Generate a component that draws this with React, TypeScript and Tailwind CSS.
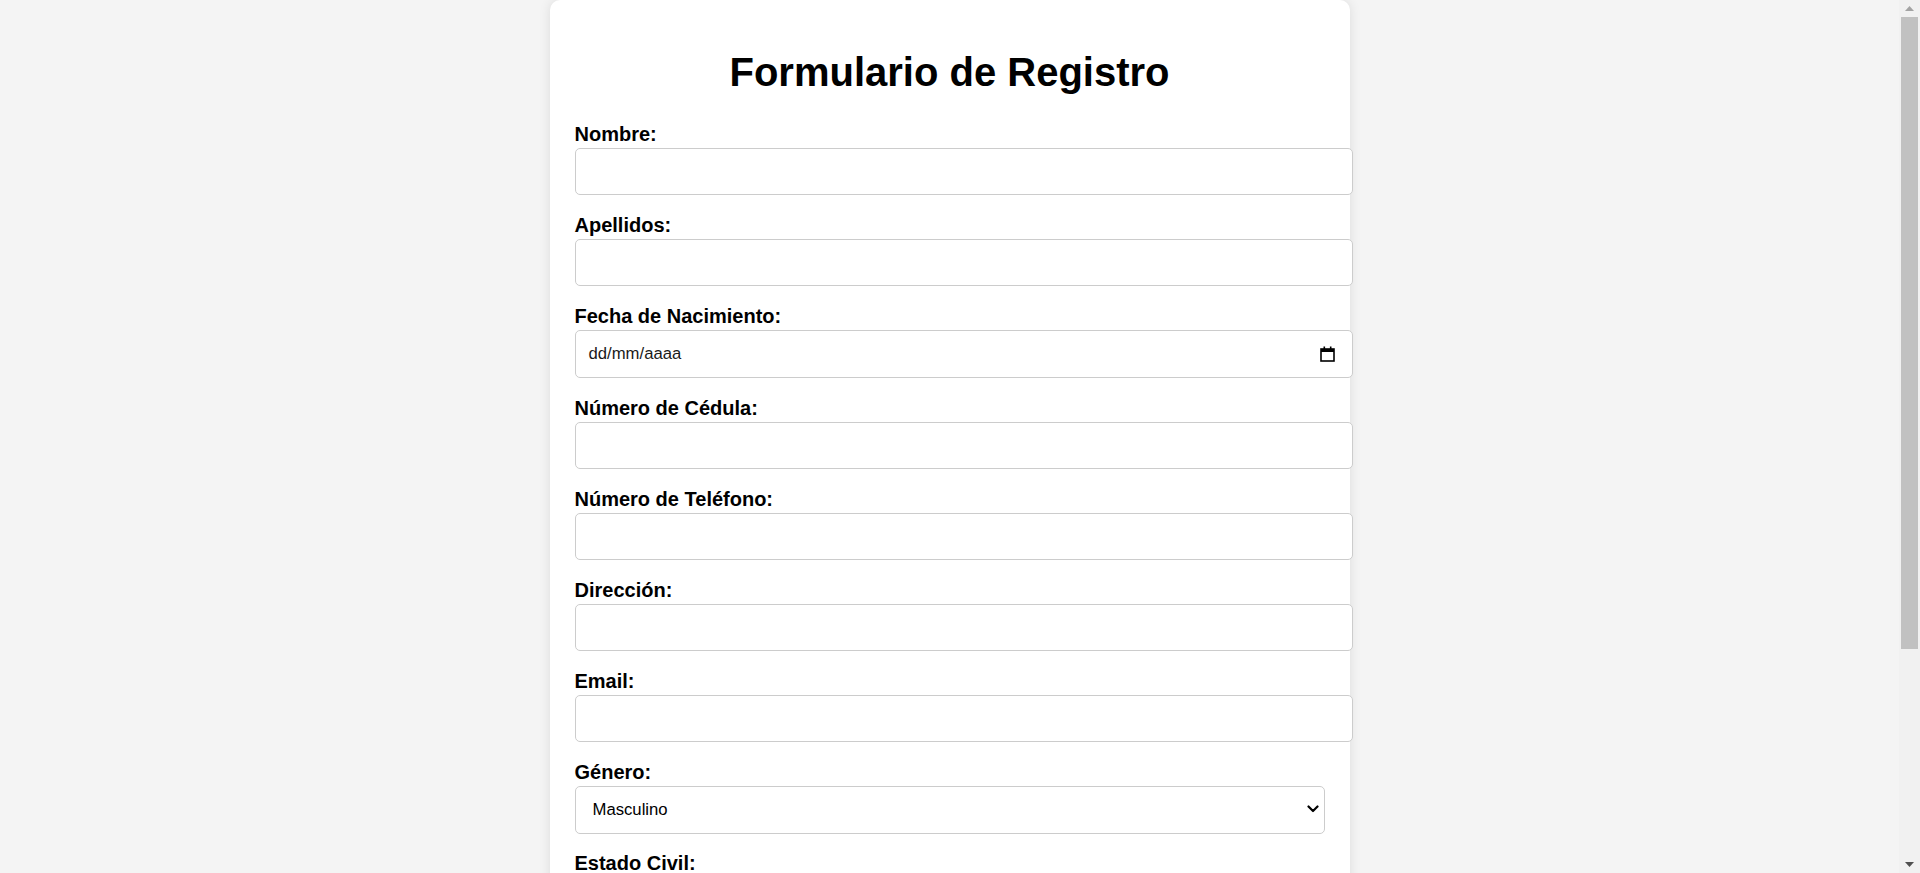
import React from "react";

const FONT = "font-['Liberation_Sans',Arial,sans-serif]";

type FieldProps = {
  label: string;
  type?: string;
};

const Label = ({ children }: { children: React.ReactNode }) => (
  <label className="mb-[2px] block text-[20px] leading-[23px] font-bold text-black">{children}</label>
);

const TextField = ({ label, type = "text" }: FieldProps) => (
  <div className="mb-[19px]">
    <Label>{label}</Label>
    <input
      type={type}
      className="block h-[47px] w-[778px] rounded-[5px] border border-[#cccccc] bg-white px-[13px] text-[16.7px] text-black outline-none"
    />
  </div>
);

const CalendarIcon = () => (
  <svg width="15" height="16" viewBox="0 0 15 16" fill="none">
    <rect x="1" y="3" width="13" height="12" stroke="#000" strokeWidth="1.6" />
    <rect x="1" y="3" width="13" height="3" fill="#000" />
    <rect x="3.5" y="0.5" width="1.6" height="3" fill="#000" />
    <rect x="9.9" y="0.5" width="1.6" height="3" fill="#000" />
  </svg>
);

const DateField = ({ label }: { label: string }) => (
  <div className="mb-[19px]">
    <Label>{label}</Label>
    <div className="flex h-[48px] w-[778px] items-center justify-between rounded-[5px] border border-[#cccccc] bg-white pr-[17px] pl-[13px]">
      <span className="text-[16.7px] text-[#1a1a1a]">dd/mm/aaaa</span>
      <CalendarIcon />
    </div>
  </div>
);

const Chevron = () => (
  <svg width="12" height="8" viewBox="0 0 12 8" fill="none">
    <path d="M1.5 1.5 L6 6 L10.5 1.5" stroke="#000" strokeWidth="2.2" strokeLinecap="round" strokeLinejoin="round" />
  </svg>
);

const SelectField = ({ label, options }: { label: string; options: string[] }) => (
  <div className="mb-[18px]">
    <Label>{label}</Label>
    <div className="relative w-[750px]">
      <select className="block h-[48px] w-full appearance-none rounded-[5px] border border-[#cccccc] bg-white pl-[17px] text-[16.7px] text-black outline-none">
        {options.map((o) => (
          <option key={o}>{o}</option>
        ))}
      </select>
      <span className="pointer-events-none absolute top-[19px] right-[6px]">
        <Chevron />
      </span>
    </div>
  </div>
);

// page scrollbar (the browser in the reference shows a classic one)
const Scrollbar = () => (
  <div className="flex h-[873px] w-[21px] shrink-0 flex-col items-center bg-[#f1f1f1]">
    <div className="flex h-[17px] w-full items-center justify-center">
      <svg width="9" height="5" viewBox="0 0 9 5">
        <path d="M0 5 L4.5 0 L9 5 Z" fill="#a3a3a3" />
      </svg>
    </div>
    <div className="h-[632px] w-[17px] bg-[#c1c1c1]" />
    <div className="flex-1" />
    <div className="flex h-[17px] w-full items-center justify-center">
      <svg width="9" height="5" viewBox="0 0 9 5">
        <path d="M0 0 L9 0 L4.5 5 Z" fill="#505050" />
      </svg>
    </div>
  </div>
);

export default function App() {
  return (
    <div className={`${FONT} flex h-[873px] overflow-hidden bg-[#f4f4f4]`}>
      <div className="min-w-0 flex-1">
        <form className="mx-auto mb-[20px] w-[800px] rounded-[10px] bg-white px-[25px] pt-[25px] pb-[25px] shadow-[0_0_12px_rgba(0,0,0,0.1)]">
          <h1 className="mt-[24px] mb-[28px] text-center text-[40px] leading-[46px] font-bold text-black">
            Formulario de Registro
          </h1>

          <TextField label="Nombre:" />
          <TextField label="Apellidos:" />
          <DateField label="Fecha de Nacimiento:" />
          <TextField label="Número de Cédula:" />
          <TextField label="Número de Teléfono:" />
          <TextField label="Dirección:" />
          <TextField label="Email:" type="email" />
          <SelectField label="Género:" options={["Masculino", "Femenino", "Otro"]} />
          <SelectField label="Estado Civil:" options={["Soltero/a", "Casado/a", "Divorciado/a", "Viudo/a"]} />
          <TextField label="Contraseña:" type="password" />

          <button
            type="submit"
            className="mt-[6px] h-[50px] w-[778px] rounded-[5px] bg-[#4caf50] text-[20px] font-bold text-white"
          >
            Registrar
          </button>
        </form>
      </div>
      <Scrollbar />
    </div>
  );
}
